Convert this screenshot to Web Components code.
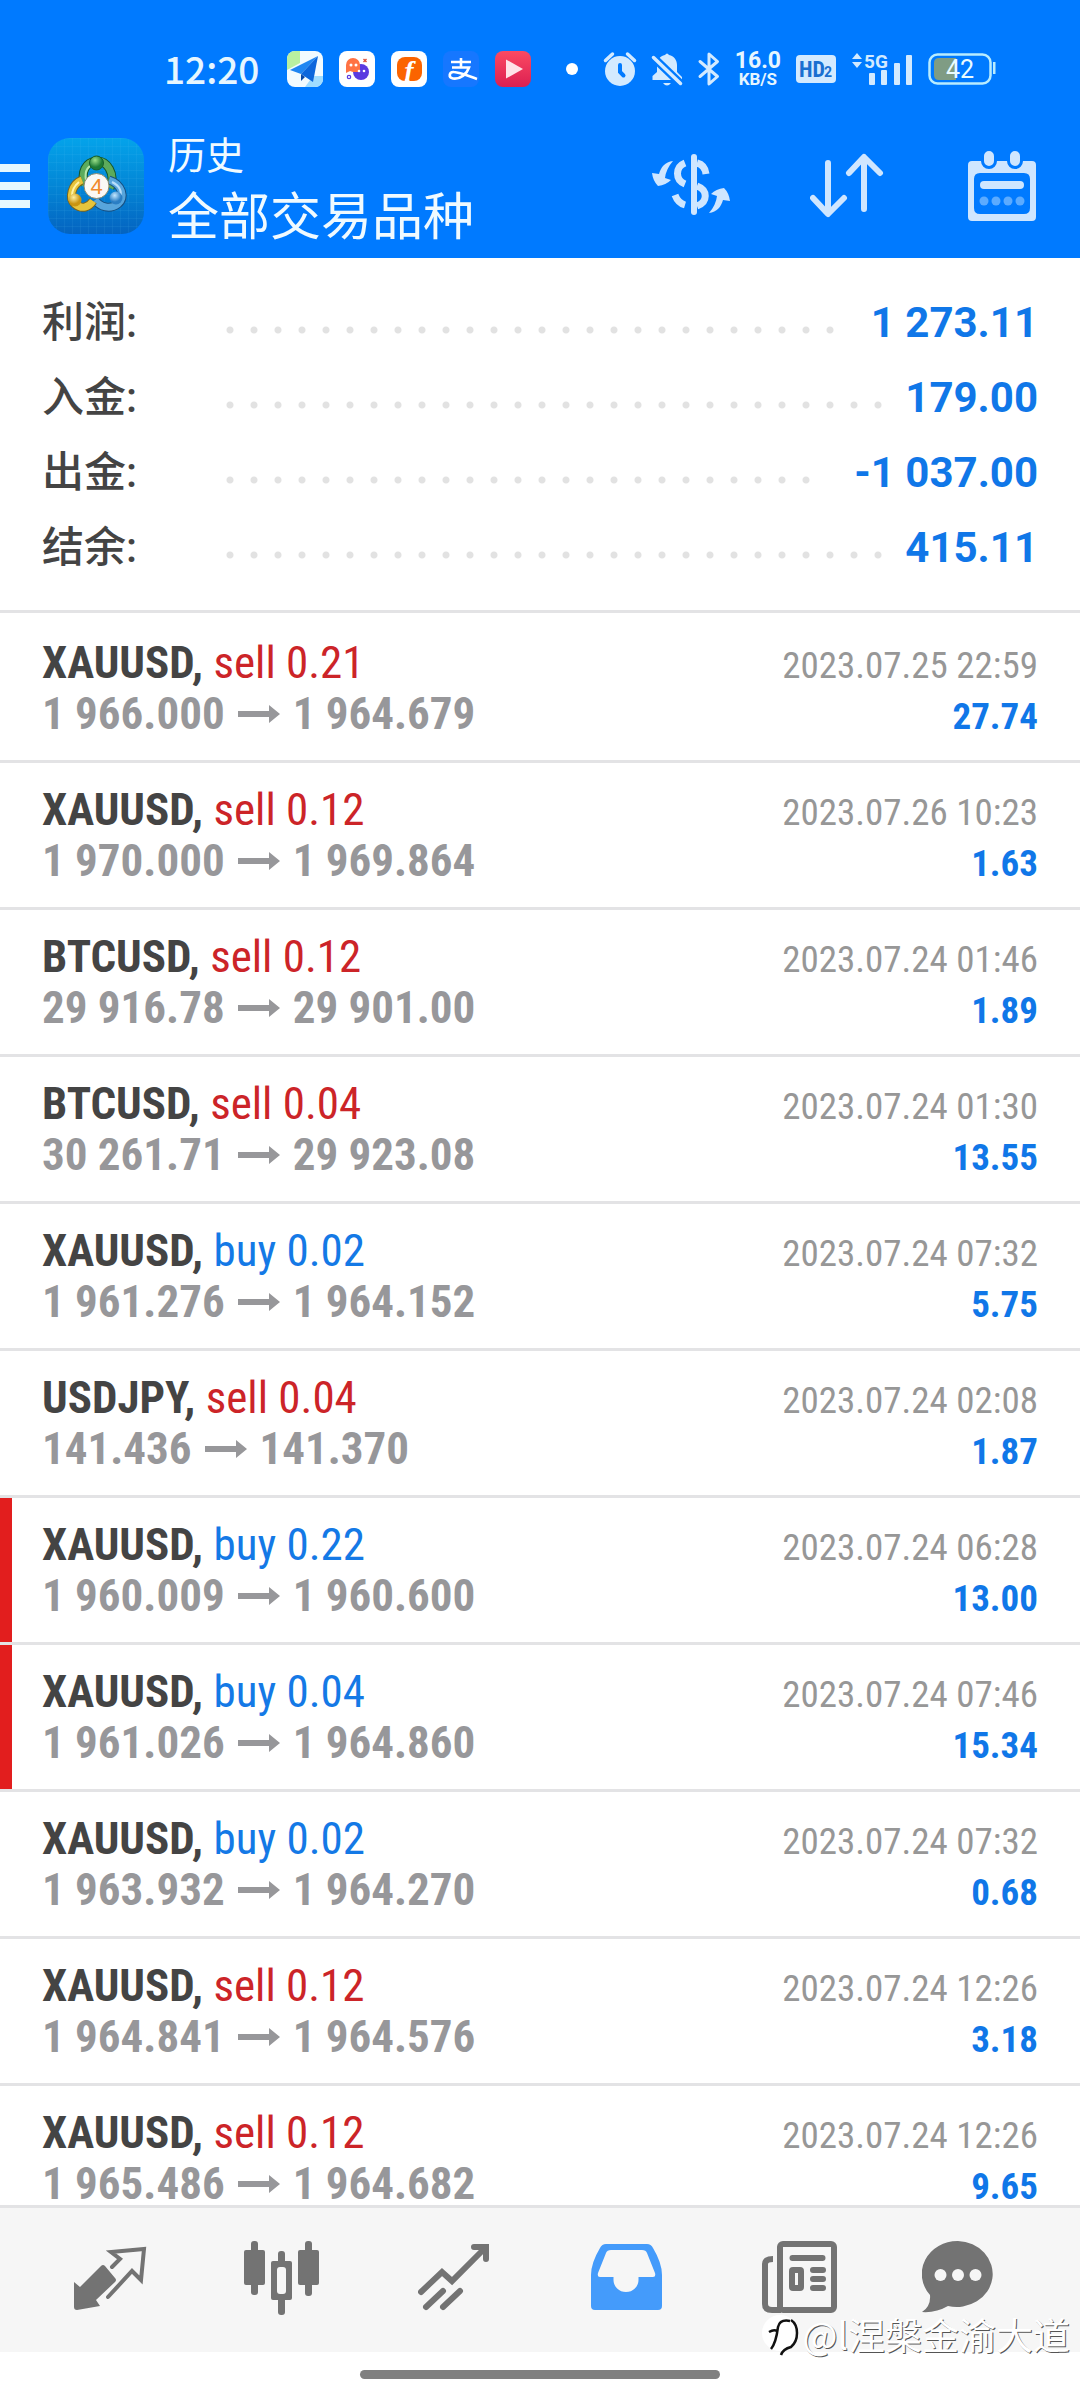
<!DOCTYPE html>
<html lang="zh-CN">
<head>
<meta charset="utf-8">
<meta name="viewport" content="width=device-width, initial-scale=1">
<title>历史</title>
<style>
html, body { margin: 0; height: 100%; background: #fff; }
body { font-family: Roboto, "Noto Sans CJK SC", sans-serif; color: #444; }
</style>
</head>
<body>
<history-app></history-app>
<script>
const define = (name, html, setup) => customElements.define(name, class extends HTMLElement {
  constructor() {
    super();
    this.attachShadow({ mode: 'open' }).innerHTML = html;
  }
  connectedCallback() { if (setup) setup(this, this.shadowRoot); }
});

define('status-bar', `
<style>
:host { display: flex; align-items: center; height: 108px; box-sizing: border-box; padding: 30px 84px 0 164px; color: #e6f6ff; }
time { font: 500 37px/40px "Noto Sans CJK SC", sans-serif; margin: 0 28px 2px 0; }
svg { display: block; flex: none; overflow: visible; }
.apps { display: flex; gap: 16px; margin-right: 35px; }
.sys { display: flex; gap: 15px; align-items: center; margin-left: auto; }
.dot { width: 12px; height: 12px; border-radius: 50%; background: #fff; }
.net { display: flex; flex-direction: column; align-items: center; font: 700 23px/20px Roboto, sans-serif; }
.net small { font: 700 17px/17px Roboto, sans-serif; }
</style>
<time>12:20</time>
<div class="apps">
  <svg width="36" height="36" viewBox="0 0 36 36"><defs><clipPath id="r"><rect width="36" height="36" rx="8"/></clipPath></defs><g clip-path="url(#r)"><rect width="36" height="36" fill="#f2fbff"/><path d="M0 0h13v12L0 19z" fill="#b9f0a0"/><path d="M26 25h10v11H18z" fill="#9fdcff"/></g><path d="M31 5L3 19l11 4z" fill="#1f86f2"/><path d="M31 5L14 23l12 8z" fill="#0b66dc"/><path d="M14 23l0 7 4-4z" fill="#0747a6"/></svg>
  <svg width="36" height="36" viewBox="0 0 36 36"><rect width="36" height="36" rx="8" fill="#fff"/><circle cx="22" cy="21" r="8" fill="#5a3be0"/><path d="M7 22V14a7 7 0 0 1 14 0v7h-7l-3-1-2 1z" fill="#ff7243"/><circle cx="12" cy="14" r="1.5" fill="#fff"/><circle cx="17" cy="14" r="1.5" fill="#fff"/><circle cx="20" cy="20" r="1.3" fill="#fff"/><circle cx="25" cy="20" r="1.3" fill="#fff"/><path d="M24.500 8l3 3m0-3l-3 3" stroke="#e0503a" stroke-width="1.400"/><circle cx="10" cy="26" r="1.700" fill="none" stroke="#5a3be0" stroke-width="1.200"/></svg>
  <svg width="36" height="36" viewBox="0 0 36 36"><rect width="36" height="36" rx="8" fill="#fff"/><rect x="6" y="6" width="25" height="24" rx="8" fill="#fb6400"/><path d="M14 28l-1 6 6-5z" fill="#fff"/><text x="18" y="29" font-family="Liberation Serif, serif" font-style="italic" font-weight="700" font-size="28" fill="#fff" text-anchor="middle">f</text></svg>
  <svg width="36" height="36" viewBox="0 0 36 36"><rect width="36" height="36" rx="8" fill="#1677ff"/><path d="M8 11h20M18 7v9M9 16.500h17c-2 6-8 12-16 11-5-1-4-7 1-6.500 7 .500 14 4 23 7" fill="none" stroke="#fff" stroke-width="2.600"/></svg>
  <svg width="36" height="36" viewBox="0 0 36 36"><defs><linearGradient id="p" x2="0" y2="1"><stop stop-color="#fb4a62"/><stop offset="1" stop-color="#dc1f52"/></linearGradient></defs><rect width="36" height="36" rx="8" fill="url(#p)"/><path d="M11 8.500v19l17-9.500z" fill="#ffe3e8"/></svg>
</div>
<div class="dot"></div>
<div class="sys">
  <svg width="32" height="34" viewBox="0 0 32 34"><circle cx="16" cy="19" r="15" fill="#d3eaff"/><path d="M16 13v7l3.500 3.500" fill="none" stroke="#007aff" stroke-width="4" stroke-linecap="round"/><path d="M1.500 8.500l7-6.500M30.500 8.500l-7-6.500" stroke="#d3eaff" stroke-width="3.500" stroke-linecap="round"/></svg>
  <svg width="32" height="34" viewBox="0 0 32 34"><path d="M14 3q2-3 4 0c5 1 8 5 8 10v7l5 5v3H1.500v-4L6 20V13c0-5 3-9 8-10z" fill="#d3eaff"/><path d="M12 31h8q-4 5-8 0z" fill="#d3eaff"/><path d="M2.500 5.500l27 26" stroke="#007aff" stroke-width="8"/><path d="M2.500 5.500l27 26" stroke="#d3eaff" stroke-width="3.500" stroke-linecap="round"/></svg>
  <svg width="22" height="34" viewBox="0 0 22 34"><path d="M2 9.500L19.500 24.500 11 32V2l8.500 7.500L2 24.500" fill="none" stroke="#d3eaff" stroke-width="3" stroke-linejoin="round" stroke-linecap="round"/></svg>
  <div class="net">16.0<small>KB/S</small></div>
  <svg width="40" height="28" viewBox="0 0 40 28"><rect width="40" height="28" rx="4" fill="#d3eaff"/><text x="3" y="22" font-family="Roboto Condensed, Liberation Sans Narrow, sans-serif" font-weight="700" font-size="22" fill="#1a6fd0">HD</text><text x="28" y="22" font-family="Roboto, sans-serif" font-weight="700" font-size="14" fill="#1a6fd0">2</text></svg>
  <svg width="62" height="34" viewBox="0 0 62 34"><g fill="#d3eaff"><path d="M1 7l5-6 5 6zM1 10l5 6 5-6z"/><rect x="18" y="21" width="6" height="12" rx="1"/><rect x="30" y="18" width="6" height="15" rx="1"/><rect x="43" y="11" width="6" height="22" rx="1"/><rect x="55" y="3" width="6" height="30" rx="1"/></g><text x="13" y="16" font-family="Roboto, sans-serif" font-weight="700" font-size="19" fill="#d3eaff">5G</text></svg>
  <svg width="68" height="32" viewBox="0 0 68 32"><rect x="1.500" y="1.500" width="61" height="29" rx="8" fill="none" stroke="#b8ecff" stroke-width="2.500"/><path d="M11 5h17v22H11q-5 0-5-5V10q0-5 5-5z" fill="#7f9c84"/><rect x="65" y="9" width="2.500" height="12" fill="#b8ecff"/><text x="32" y="25" font-family="Roboto, sans-serif" font-size="25" fill="#e9fbff" text-anchor="middle">42</text></svg>
</div>`);

define('app-header', `
<style>
:host { display: flex; align-items: center; height: 150px; box-sizing: border-box; padding: 14px 44px 8px 0; color: #f0faff; }
button { all: unset; display: block; cursor: pointer; flex: none; }
svg { display: block; }
.menu { margin-right: 18px; }
.logo { margin-right: 24px; }
h1, p { margin: 0; font-weight: 400; font-family: "Noto Sans CJK SC", sans-serif; }
p { font-size: 38px; line-height: 56px; }
h1 { font-size: 51px; line-height: 64px; }
.titles { flex: 1; min-width: 0; white-space: nowrap; padding-bottom: 2px; }
.actions { display: flex; gap: 80px; align-items: center; }
</style>
<button class="menu" aria-label="菜单"><svg width="30" height="44" viewBox="0 0 30 44" fill="#e6f8ff"><path d="M0 0h30v8H0zM0 18h30v8H0zM0 36h30v8H0z"/></svg></button>
<svg class="logo" width="96" height="96" viewBox="0 0 96 96">
  <defs>
    <linearGradient id="bg" x2="0" y2="1"><stop stop-color="#04a3ea"/><stop offset=".5" stop-color="#0386d6"/><stop offset="1" stop-color="#0463c0"/></linearGradient>
    <radialGradient id="g" cx=".4" cy=".3"><stop stop-color="#9be08a"/><stop offset="1" stop-color="#1d7a35"/></radialGradient>
    <radialGradient id="y" cx=".4" cy=".3"><stop stop-color="#fff0a0"/><stop offset="1" stop-color="#c99412"/></radialGradient>
    <radialGradient id="b" cx=".4" cy=".3"><stop stop-color="#c4e8ff"/><stop offset="1" stop-color="#2a7ec4"/></radialGradient>
    <pattern id="grid" width="8" height="8" patternUnits="userSpaceOnUse"><path d="M8 0H0V8" fill="none" stroke="#5cc4f5" stroke-opacity=".18"/></pattern>
  </defs>
  <rect width="96" height="96" rx="22" fill="url(#bg)"/><rect width="96" height="96" rx="22" fill="url(#grid)"/>
  <g fill="none" stroke-linejoin="round">
    <path d="M37 47C32 34 38 24 48.500 23S68 36 62 50" stroke="#14552a" stroke-width="9"/><path d="M37 47C32 34 38 24 48.500 23S68 36 62 50" stroke="#5cab5c" stroke-width="7"/><path d="M38 42C36 32 41 27 47 26" stroke="#b5e6ab" stroke-width="2"/>
    <path d="M61 42c13 4 17 18 9 24s-18 3-23-4" stroke="#174f80" stroke-width="9"/><path d="M61 42c13 4 17 18 9 24s-18 3-23-4" stroke="#57a5dc" stroke-width="7"/><path d="M64 44c8 4 10 10 8 16" stroke="#b8defa" stroke-width="2"/>
    <path d="M34 42c-10 4-14 18-7 24s14 3 18-3" stroke="#7c641a" stroke-width="9"/><path d="M34 42c-10 4-14 18-7 24s14 3 18-3" stroke="#e6c43c" stroke-width="7"/><path d="M31 44c-5 4-7 8-7 14" stroke="#fff3a8" stroke-width="2"/>
  </g>
  <circle cx="48.500" cy="25" r="7" fill="url(#g)" stroke="#175f2b"/><circle cx="27" cy="62" r="6.500" fill="url(#y)"/><circle cx="68" cy="60" r="6.500" fill="url(#b)"/>
  <circle cx="48.500" cy="48" r="12.500" fill="#fbf9f5" stroke="#8a8a70"/>
  <text x="48.500" y="56" text-anchor="middle" font-family="Liberation Sans, sans-serif" font-size="22" fill="#f08a2c">4</text>
</svg>
<div class="titles"><p>历史</p><h1>全部交易品种</h1></div>
<div class="actions">
  <button aria-label="币种"><svg width="78" height="68" viewBox="0 0 78 68"><path d="M42 5v55" stroke="#cfe6ff" stroke-width="6" stroke-linecap="round"/><path d="M33 11C23 15 23 28 33 32M23 43q3 8 10 10M45 11q8 2 9 11M45 34c11 4 11 16 0 20" fill="none" stroke="#cfe6ff" stroke-width="7"/><path id="a" d="M21 9C13 10 9 15 7 22L0 21Q1 29 6 34 14 33 19 28L13 26Q14 17 21 9z" fill="#cfe6ff"/><use href="#a" transform="rotate(180 39 35)"/></svg></button>
  <button aria-label="排序"><svg width="78" height="68" viewBox="0 0 78 68"><path d="M18 11v50M3 46l15 16 16-16M54 57V6M39 21L54 5l16 16" fill="none" stroke="#cfe6ff" stroke-width="6" stroke-linecap="round" stroke-linejoin="round"/></svg></button>
  <button aria-label="日期"><svg width="68" height="72" viewBox="0 0 68 72"><path fill-rule="evenodd" d="M4 11H64q4 0 4 4V67q0 4-4 4H4q-4 0-4-4V15q0-4 4-4zM12 23q-6 0-6 6V58q0 6 6 6H56q6 0 6-6V29q0-6-6-6z" fill="#cfe6ff"/><path d="M21 6v5M47 6v5" stroke="#007aff" stroke-width="16" stroke-linecap="round"/><path d="M21 6v5M47 6v5" stroke="#cfe6ff" stroke-width="10" stroke-linecap="round"/><rect x="12" y="31" width="44" height="8" rx="4" fill="#cfe6ff"/><g fill="#5cabff"><circle cx="16" cy="51" r="4.500"/><circle cx="28" cy="51" r="4.500"/><circle cx="40" cy="51" r="4.500"/><circle cx="52" cy="51" r="4.500"/></g></svg></button>
</div>`);

define('summary-line', `
<style>
:host { display: flex; align-items: center; height: 75px; }
.label { width: 176px; font-weight: 500; font-size: 42px; line-height: 60px; white-space: nowrap; }
.leader { flex: 1; padding-top: 14px; }
.dots { height: 8px; width: round(down, 100%, 24px); background: radial-gradient(circle at center, #e2e2e2 3px, transparent 4px) 0 0 / 24px 8px repeat-x; }
.value { margin-left: 14px; font-weight: 700; font-size: 42px; line-height: 60px; color: #1077e8; white-space: nowrap; }
</style>
<div class="label"><slot name="label"></slot></div>
<div class="leader"><div class="dots"></div></div>
<div class="value"><slot></slot></div>`);

define('account-summary', `
<style>:host { display: block; padding: 27px 42px 25px; border-bottom: 3px solid #e3e3e5; }</style>
<slot></slot>`);

define('deal-row', `
<style>
:host { display: flex; justify-content: space-between; height: 123px; padding: 21px 42px 0; border-bottom: 3px solid #e3e3e5; font-family: "Roboto Condensed", "Liberation Sans Narrow", sans-serif; white-space: nowrap; background: linear-gradient(#e21e1e, #e21e1e) no-repeat 0 0 / var(--mark, 0) 100%; background-clip: padding-box; }
:host([marked]) { --mark: 12px; }
:host([side="sell"]) { --side: #cc2428; }
:host([side="buy"]) { --side: #1479e6; }
.left { font-size: 45px; line-height: 51px; }
.right { font-size: 37px; line-height: 51px; text-align: right; padding-top: 3px; }
b { font-weight: 700; }
.side { color: var(--side); }
.prices { display: flex; align-items: center; gap: 13px; font-weight: 700; color: #97979a; }
.time { color: #979797; }
.profit { font-weight: 700; color: #1077e8; }
</style>
<div class="left">
  <div><b class="symbol"></b> <span class="side"></span></div>
  <div class="prices"><span class="open"></span><svg width="42" height="18" viewBox="0 0 42 18" fill="#97979a"><path d="M0 6h31V0l11 9-11 9v-6H0z"/></svg><span class="close"></span></div>
</div>
<div class="right"><div class="time"></div><div class="profit"></div></div>`,
(host, root) => {
  const put = (cls, text) => { root.querySelector('.' + cls).textContent = text; };
  put('symbol', host.getAttribute('symbol') + ',');
  put('side', host.getAttribute('side') + ' ' + host.getAttribute('volume'));
  for (const k of ['open', 'close', 'time', 'profit']) put(k, host.getAttribute(k));
});

const deals = [
  ['XAUUSD', 'sell', '0.21', '1 966.000', '1 964.679', '2023.07.25 22:59', '27.74'],
  ['XAUUSD', 'sell', '0.12', '1 970.000', '1 969.864', '2023.07.26 10:23', '1.63'],
  ['BTCUSD', 'sell', '0.12', '29 916.78', '29 901.00', '2023.07.24 01:46', '1.89'],
  ['BTCUSD', 'sell', '0.04', '30 261.71', '29 923.08', '2023.07.24 01:30', '13.55'],
  ['XAUUSD', 'buy', '0.02', '1 961.276', '1 964.152', '2023.07.24 07:32', '5.75'],
  ['USDJPY', 'sell', '0.04', '141.436', '141.370', '2023.07.24 02:08', '1.87'],
  ['XAUUSD', 'buy', '0.22', '1 960.009', '1 960.600', '2023.07.24 06:28', '13.00', true],
  ['XAUUSD', 'buy', '0.04', '1 961.026', '1 964.860', '2023.07.24 07:46', '15.34', true],
  ['XAUUSD', 'buy', '0.02', '1 963.932', '1 964.270', '2023.07.24 07:32', '0.68'],
  ['XAUUSD', 'sell', '0.12', '1 964.841', '1 964.576', '2023.07.24 12:26', '3.18'],
  ['XAUUSD', 'sell', '0.12', '1 965.486', '1 964.682', '2023.07.24 12:26', '9.65']
];

define('deal-list', `
<style>:host { display: block; padding-top: 3px; overflow: hidden; }</style>
<div></div>`,
(host, root) => {
  root.querySelector('div').innerHTML = deals.map(([s, d, v, o, c, t, p, m]) =>
    `<deal-row symbol="${s}" side="${d}" volume="${v}" open="${o}" close="${c}" time="${t}" profit="${p}"${m ? ' marked' : ''}></deal-row>`).join('');
});

define('tab-bar', `
<style>
:host { display: block; color: #737373; }
nav { display: flex; height: 140px; padding: 0 24px 4px; background: #f6f6f6; border-top: 3px solid #e3e3e5; }
button { all: unset; flex: 1; display: flex; justify-content: center; align-items: center; cursor: pointer; }
svg { display: block; }
.home { height: 48px; display: flex; justify-content: center; align-items: center; background: #fff; }
.home i { width: 33.333%; height: 9px; margin-bottom: 3px; border-radius: 5px; background: #808080; }
</style>
<nav>
  <button aria-label="行情"><svg width="74" height="74" viewBox="0 -5 74 74"><path d="M1 36l6 5 21-21q2-2 4 0l10 12q2 2 0 4L23 54l4 6-23 4q-3 0-3-3z" fill="currentColor"/><path d="M39 21l8-8-9-7 33-3-3 31-9-9-24 26" fill="none" stroke="currentColor" stroke-width="4" stroke-linecap="round"/></svg></button>
  <button aria-label="图表"><svg width="76" height="74" viewBox="0 0 76 74" fill="currentColor"><rect y="9" width="21" height="35" rx="2"/><rect x="7" width="7" height="54" rx="3"/><rect x="54" y="9" width="21" height="35" rx="2"/><rect x="61" width="7" height="55" rx="3"/><rect x="34" y="10" width="7" height="64" rx="3"/><rect x="27" y="20" width="21" height="39" rx="2"/><rect x="33" y="26" width="9" height="27" rx="3" fill="#f6f6f6"/></svg></button>
  <button aria-label="交易"><svg width="72" height="74" viewBox="0 -2 72 74" fill="none" stroke="currentColor" stroke-width="6" stroke-linecap="round"><path d="M3 49l21-20 10 9L67 5M56 4h12v12M8 64l17-16M25 64l17-16"/></svg></button>
  <button aria-label="历史" aria-current="page"><svg width="73" height="74" viewBox="0 -3 73 74"><path fill-rule="evenodd" d="M16 0H57q4 0 6 4 9 15 9 27V62q0 4-4 4H5q-4 0-4-4V31Q1 19 10 4q2-4 6-4zM21 6q-4 0-5 3L8 29q-1 4 2 4H23.500V36a12.500 12 0 0 0 25 0V33H63q3 0 2-4L57 9q-1-3-5-3z" fill="#449bfb"/></svg></button>
  <button aria-label="新闻"><svg width="80" height="74" viewBox="-4 0 80 74" fill="none" stroke="currentColor" stroke-width="6"><rect x="18" y="3" width="54" height="66" rx="3"/><path d="M11 18q-8 0-8 5V63q0 6 7 6h9"/><path d="M30.500 17h30M51 29h10M51 38h10M51 47h10" stroke-linecap="round"/><rect x="30" y="29" width="9" height="18" rx="1"/></svg></button>
  <button aria-label="邮箱"><svg width="96" height="74" viewBox="0 0 96 74"><path d="M36 0a36 33 0 1 1-10 65Q14 72 0 71 9 65 8 54A36 33 0 0 1 36 0z" fill="currentColor"/><g fill="#f6f6f6"><circle cx="18.500" cy="34" r="6"/><circle cx="36" cy="34" r="6"/><circle cx="53.500" cy="34" r="6"/></g></svg></button>
</nav>
<div class="home"><i></i></div>`);

define('water-mark', `
<style>
:host { position: absolute; right: 10px; bottom: 40px; display: flex; align-items: center; font: 400 37px/52px "Noto Sans CJK SC", sans-serif; color: #fff; text-shadow: 1px 1px 0 #555; white-space: nowrap; }
svg { display: block; }
</style>
<svg width="42" height="48" viewBox="0 0 42 48"><circle cx="20" cy="23" r="18" fill="#fff"/><path d="M11 39q5-6 7-22 2-8 12-6M9 22q5-3 8-1M31 10q6 4 6 13t-6 14q-8 2-10 8" fill="none" stroke="#111" stroke-width="2.500"/></svg>
<span>@l涅槃金渝大道</span>`);

define('history-app', `
<style>
:host { display: flex; flex-direction: column; height: 100vh; position: relative; overflow: hidden; background: #fff; }
header { flex: none; background: #007aff; }
account-summary, tab-bar { flex: none; }
deal-list { flex: 1; min-height: 0; }
</style>
<header><status-bar></status-bar><app-header></app-header></header>
<account-summary>
  <summary-line><span slot="label">利润:</span>1 273.11</summary-line>
  <summary-line><span slot="label">入金:</span>179.00</summary-line>
  <summary-line><span slot="label">出金:</span>-1 037.00</summary-line>
  <summary-line><span slot="label">结余:</span>415.11</summary-line>
</account-summary>
<deal-list></deal-list>
<tab-bar></tab-bar>
<water-mark></water-mark>`);
</script>
</body>
</html>
